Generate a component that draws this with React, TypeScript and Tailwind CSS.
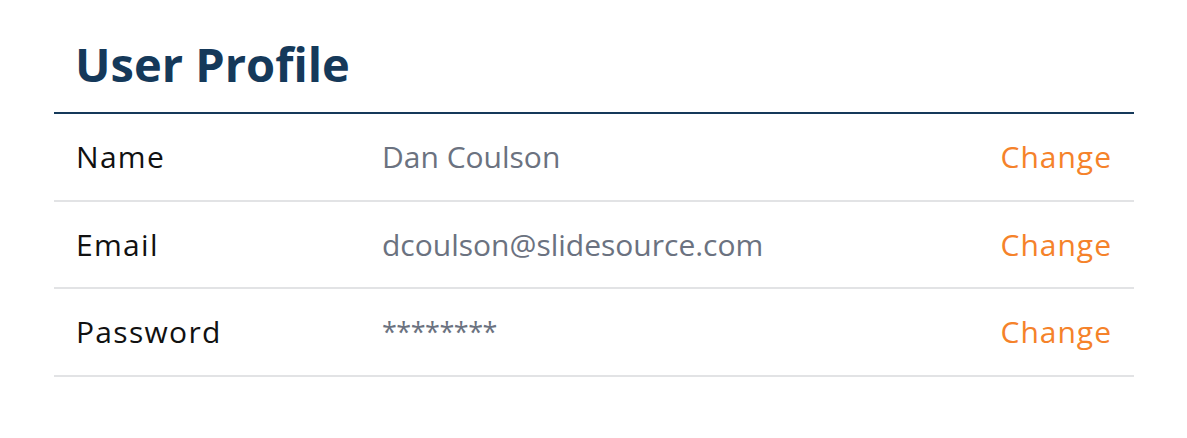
export default function App() {
  const rows = [
    { label: "Name", value: "Dan Coulson", mask: false },
    { label: "Email", value: "dcoulson@slidesource.com", mask: false },
    { label: "Password", value: "********", mask: true },
  ];
  return (
    <div className="min-h-[438px] bg-white px-[54px] pt-[25px]" style={{ fontFamily: '"Open Sans", "Noto Sans", sans-serif' }}>
      <div className="w-[1080px]">
        <h1 className="border-b-2 border-[#15395a] pl-[21px] pr-[22px] pt-[5px] pb-[14px] text-[47px] font-bold leading-[68px] text-[#15395a]">
          User Profile
        </h1>
        {rows.map((r) => (
          <div key={r.label} className="flex h-[87.5px] items-center border-b-2 border-[#e2e3e5] px-[22px] text-[30px]">
            <div className="w-[306px] tracking-[1.3px] text-[#111111]">{r.label}</div>
            <div className={r.mask ? "flex-1 text-[27px] tracking-[-0.5px] text-[#6b7280]" : "flex-1 text-[#6b7280]"}>{r.value}</div>
            <div className="tracking-[1px] text-[#f5822a]">Change</div>
          </div>
        ))}
      </div>
    </div>
  );
}
